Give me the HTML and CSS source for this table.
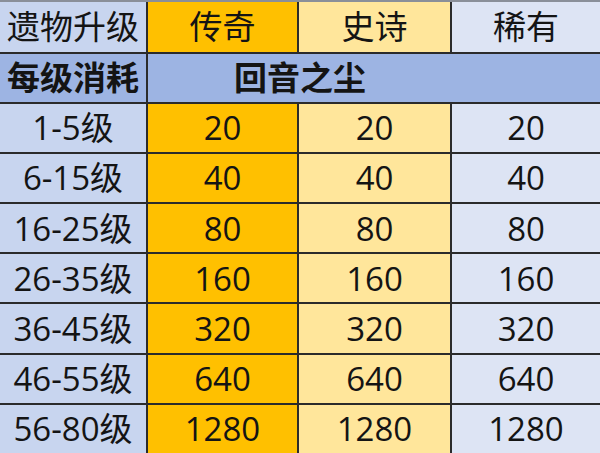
FILE: index.html
```html
<!DOCTYPE html>
<html lang="zh-CN">
<head>
<meta charset="utf-8">
<title>遗物升级</title>
<link rel="stylesheet" href="styles.css">
</head>
<body>
<div class="sheet">
  <div class="cell lab">遗物升级</div>
  <div class="cell leg">传奇</div>
  <div class="cell epic">史诗</div>
  <div class="cell rare">稀有</div>

  <div class="cell sub bold">每级消耗</div>
  <div class="cell sub bold merged">回音之尘</div>

  <div class="cell lab">1-5级</div><div class="cell leg">20</div><div class="cell epic">20</div><div class="cell rare">20</div>
  <div class="cell lab">6-15级</div><div class="cell leg">40</div><div class="cell epic">40</div><div class="cell rare">40</div>
  <div class="cell lab">16-25级</div><div class="cell leg">80</div><div class="cell epic">80</div><div class="cell rare">80</div>
  <div class="cell lab">26-35级</div><div class="cell leg">160</div><div class="cell epic">160</div><div class="cell rare">160</div>
  <div class="cell lab">36-45级</div><div class="cell leg">320</div><div class="cell epic">320</div><div class="cell rare">320</div>
  <div class="cell lab">46-55级</div><div class="cell leg">640</div><div class="cell epic">640</div><div class="cell rare">640</div>
  <div class="cell lab">56-80级</div><div class="cell leg">1280</div><div class="cell epic">1280</div><div class="cell rare">1280</div>
</div>
</body>
</html>
```

FILE: styles.css
```css
html, body {
  margin: 0;
  padding: 0;
  background: #dde4f4;
}
body {
  width: 600px;
  height: 453px;
  overflow: hidden;
}
.sheet {
  box-sizing: border-box;
  width: 600px;
  height: 453px;
  border-top: 2px solid #8a8f99;
  background: #2b2b2b;
  display: grid;
  grid-template-columns: 146px 149px 151px 1fr;
  grid-template-rows: 49.5px repeat(8, 48.2px);
  gap: 2px;
  font-family: "Open Sans", "Noto Sans CJK SC", sans-serif;
  font-size: 33px;
  color: #141414;
}
.cell {
  display: flex;
  align-items: center;
  justify-content: center;
  line-height: 1;
  white-space: nowrap;
}
.lab { background: #c8d5ef; }
.leg { background: #ffc000; }
.epic { background: #ffe69b; }
.rare { background: #dde4f4; }
.sub { background: #9db4e3; }
.bold { font-weight: 700; }
.merged {
  grid-column: 2 / 5;
  justify-content: flex-start;
  padding-left: 86px;
}
```
